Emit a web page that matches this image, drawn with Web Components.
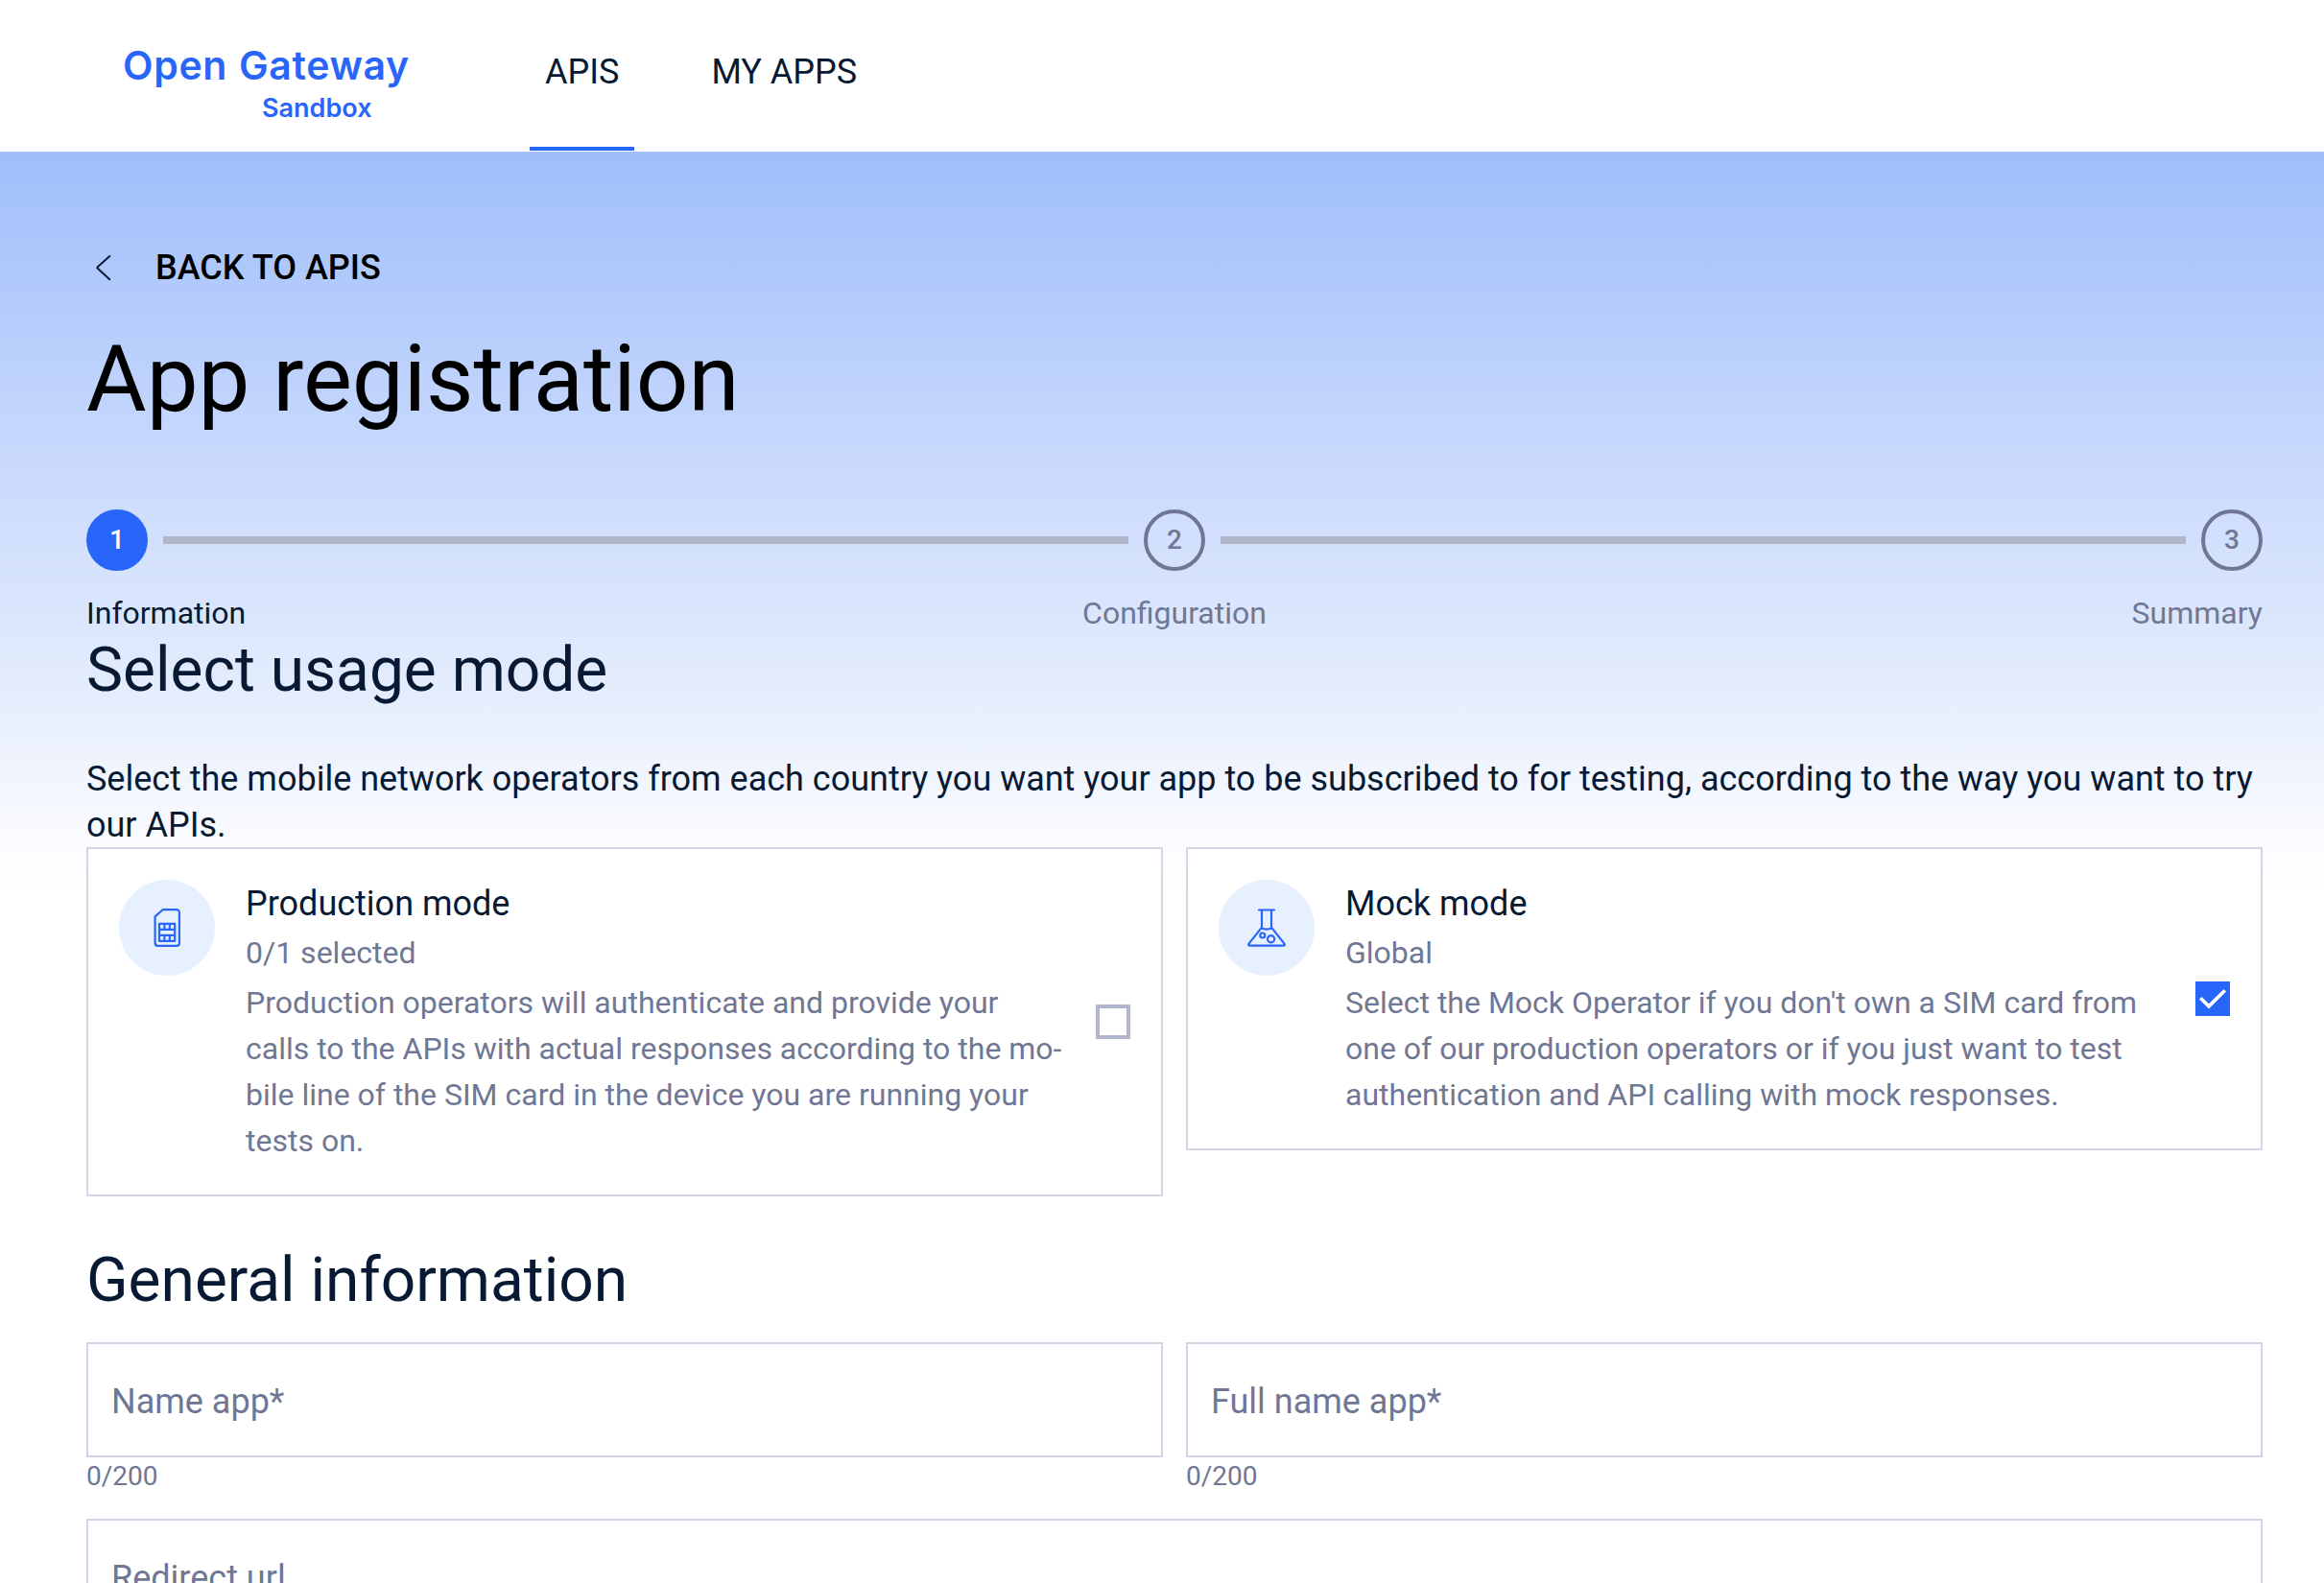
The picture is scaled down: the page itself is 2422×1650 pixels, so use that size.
<!DOCTYPE html>
<html lang="en">
<head>
<meta charset="utf-8">
<title>App registration</title>
<style>
  html, body { margin: 0; background: #fff; }
  body { font-family: Roboto, sans-serif; color: #081a33; height: 1650px; overflow: hidden; }
</style>
</head>
<body>
<og-page>
  <og-header slot="header">
    <og-nav-link active>APIS</og-nav-link>
    <og-nav-link>MY APPS</og-nav-link>
  </og-header>
  <og-back>BACK TO APIS</og-back>
  <og-title>App registration</og-title>
  <og-stepper></og-stepper>
  <og-heading style="margin-top:1px">Select usage mode</og-heading>
  <og-text>Select the mobile network operators from each country you want your app to be subscribed to for testing, according to the way you want to try our APIs.</og-text>
  <og-row>
    <og-mode-card heading="Production mode" sub="0/1 selected" icon="sim">Production operators will authenticate and provide your calls to the APIs with actual responses according to the mo&shy;bile line of the SIM card in the device you are running your tests on.</og-mode-card>
    <og-mode-card heading="Mock mode" sub="Global" icon="flask" checked>Select the Mock Operator if you don't own a SIM card from one of our production operators or if you just want to test authentication and API calling with mock responses.</og-mode-card>
  </og-row>
  <og-heading style="margin-top:52px">General information</og-heading>
  <og-row style="margin-top:28px">
    <og-field label="Name app*" count="0/200"></og-field>
    <og-field label="Full name app*" count="0/200"></og-field>
  </og-row>
  <og-row style="margin-top:25px">
    <og-field label="Redirect url"></og-field>
  </og-row>
</og-page>
<script>
const define = (name, render) => customElements.define(name, class extends HTMLElement {
  connectedCallback() {
    if (this.shadowRoot) return;
    this.attachShadow({ mode: 'open' }).innerHTML = render(this);
  }
});

define('og-page', () => `
  <style>
    :host { display: flex; flex-direction: column; height: 1650px; overflow: hidden; }
    main { flex: none; height: 1492px; box-sizing: border-box; padding: 97px 64px 0 90px; overflow: hidden; display: flex; flex-direction: column;
      background: linear-gradient(180deg, #9fbefa 0, #d0defd 380px, #dde8fc 508px, #fdfdff 740px, #fff 770px); }
  </style>
  <slot name="header"></slot>
  <main><slot></slot></main>`);

define('og-header', () => `
  <style>
    :host { display: flex; flex: none; height: 158px; background: #fff; }
    .logo { display: flex; flex-direction: column; margin-left: 128px; width: 424px; font-family: Inter, sans-serif; font-weight: 600; color: #2866fa; white-space: nowrap; }
    .a { font-size: 41px; line-height: 48px; margin-top: 44px; letter-spacing: .65px; word-spacing: 1px; }
    .b { font-size: 27px; line-height: 32px; margin-top: 5px; margin-left: 145px; }
    nav { display: flex; gap: 64px; }
  </style>
  <div class="logo"><span class="a">Open Gateway</span><span class="b">Sandbox</span></div>
  <nav><slot></slot></nav>`);

define('og-nav-link', () => `
  <style>
    :host { display: flex; flex-direction: column; box-sizing: border-box; height: 157px; padding: 51px 16px 0; border-bottom: 4px solid transparent; font-size: 36px; line-height: 48px; white-space: nowrap; }
    :host([active]) { border-color: #2866fa; }
  </style><slot></slot>`);

define('og-back', () => `
  <style>
    :host { display: flex; align-items: center; gap: 45px; padding-left: 9px; height: 48px; font-size: 36px; font-weight: 500; line-height: 48px; color: #000; }
    svg { display: block; }
  </style>
  <svg width="18" height="28" viewBox="0 0 18 28" fill="none" stroke="#081a33" stroke-width="2" stroke-linecap="round" stroke-linejoin="round"><path d="M15.3 2 2.5 13.6Q2 14.1 2.5 14.6L15.3 26.3"/></svg>
  <slot></slot>`);

define('og-title', () => `
  <style>:host { display: block; margin-top: 36px; font-size: 96px; line-height: 112px; color: #000; }</style><slot></slot>`);

define('og-stepper', () => `
  <style>
    :host { display: block; height: 131px; margin-top: 80px; color: #707794; }
    .track { display: flex; align-items: center; gap: 16px; }
    .dot { box-sizing: border-box; width: 64px; height: 64px; border: 4px solid #707794; border-radius: 50%; display: flex; align-items: center; justify-content: center; font-size: 28px; font-weight: 500; line-height: 32px; }
    .dot.on { background: #2866fa; border-color: #2866fa; color: #fff; }
    .line { flex: 1; height: 8px; background: #b0b5c8; }
    .labels { display: grid; grid-template-columns: 1fr auto 1fr; margin-top: 20px; font-size: 32px; line-height: 48px; }
    .on { color: #081a33; }
    .end { text-align: right; }
  </style>
  <div class="track"><div class="dot on">1</div><div class="line"></div><div class="dot">2</div><div class="line"></div><div class="dot">3</div></div>
  <div class="labels"><span class="on">Information</span><span>Configuration</span><span class="end">Summary</span></div>`);

define('og-heading', () => `
  <style>:host { display: block; font-size: 64px; line-height: 72px; }</style><slot></slot>`);

define('og-text', () => `
  <style>:host { display: block; margin: 53px 0 -1px; font-size: 36px; line-height: 48px; letter-spacing: -.01px; }</style><slot></slot>`);

define('og-row', () => `
  <style>:host { display: flex; align-items: flex-start; gap: 24px; } ::slotted(*) { flex: 1 1 0; min-width: 0; }</style><slot></slot>`);

const icons = {
  sim: `<path d="M15.6 1.2H30A2.9 2.9 0 0 1 32.9 4.1V35.9A2.9 2.9 0 0 1 30 38.8H10.5A2.9 2.9 0 0 1 7.6 35.9V8.4Z"/><path d="M12 15.9H28.2V33.8H12ZM12 21.8H28.2M12 27.8H28.2M17.4 15.9V21.8M22.8 15.9V21.8M17.4 27.8V33.8M22.8 27.8V33.8"/>`,
  flask: `<path d="M12 1.5H28M15 2V19.6L1.5 36.6Q.6 38.6 2.6 38.6H37.4Q39.4 38.6 38.5 36.6L25 19.6V2M15 20.6Q20 22.6 25 20.6"/><circle cx="15.8" cy="28" r="2.5"/><circle cx="24.6" cy="31.8" r="3.6"/>`
};

define('og-mode-card', el => `
  <style>
    :host { display: flex; box-sizing: border-box; border: 2px solid #d3d6e6; background: #fff; padding: 32px; }
    .icon { flex: none; width: 100px; height: 100px; border-radius: 50%; background: #e6f0ff; display: flex; align-items: center; justify-content: center; }
    .body { flex: 1; min-width: 0; margin: 0 32px; display: flex; flex-direction: column; gap: 4px; font-size: 32px; line-height: 48px; color: #707794; }
    .h { font-size: 36px; color: #081a33; margin: 1px 0 -1px; }
    .box { flex: none; align-self: center; box-sizing: border-box; width: 36px; height: 36px; border: 4px solid #b0b5cc; }
    .box.on { border: 0; background: #2866fa; }
    svg { display: block; }
  </style>
  <div class="icon"><svg width="40" height="40" viewBox="0 0 40 40" fill="none" stroke="#2866fa" stroke-width="2.2" stroke-linejoin="round" stroke-linecap="round">${icons[el.getAttribute('icon')]}</svg></div>
  <div class="body"><div class="h">${el.getAttribute('heading')}</div><div>${el.getAttribute('sub')}</div><div><slot></slot></div></div>
  ${el.hasAttribute('checked')
    ? '<div class="box on"><svg width="36" height="36" viewBox="0 0 36 36" fill="none" stroke="#fff" stroke-width="3.6"><path d="M5.2 17.2 14 25.9 30.8 9.3"/></svg></div>'
    : '<div class="box"></div>'}`);

define('og-field', el => `
  <style>
    :host { display: block; color: #707794; }
    .f { box-sizing: border-box; height: 120px; border: 2px solid #d0d4e6; background: #fff; padding: 36px 24px 0; font-size: 36px; line-height: 48px; }
    .c { font-size: 28px; line-height: 39px; }
  </style>
  <div class="f">${el.getAttribute('label')}</div>
  ${el.hasAttribute('count') ? `<div class="c">${el.getAttribute('count')}</div>` : ''}`);
</script>
</body>
</html>
